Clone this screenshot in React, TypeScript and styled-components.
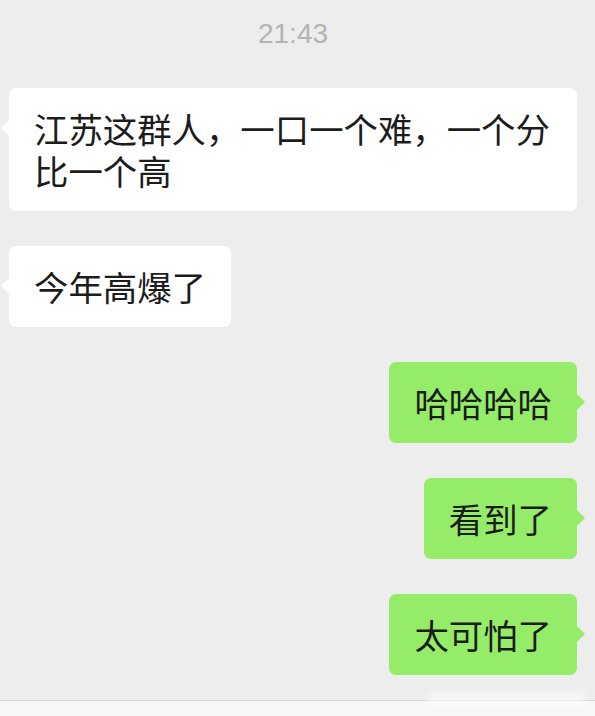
import React from 'react';
import styled, { createGlobalStyle } from 'styled-components';

const GlobalStyle = createGlobalStyle`
  html, body {
    margin: 0;
    padding: 0;
    background: #ededed;
  }
  body {
    font-family: 'Noto Sans CJK SC', 'Noto Sans', sans-serif;
  }
`;

const Screen = styled.div`
  position: relative;
  min-height: 716px;
  display: flex;
  flex-direction: column;
  background: #ededed;
  overflow: hidden;
`;

const Time = styled.div`
  margin-top: 14px;
  padding-right: 9px;
  height: 40px;
  line-height: 40px;
  text-align: center;
  font-family: 'Liberation Sans', 'Noto Sans', sans-serif;
  font-size: 28px;
  color: #b3b3b3;
`;

const List = styled.div`
  display: flex;
  flex-direction: column;
  gap: 35px;
  padding: 34px 18px 25px 9px;
`;

const Row = styled.div<{ $mine?: boolean }>`
  display: flex;
  justify-content: ${(p) => (p.$mine ? 'flex-end' : 'flex-start')};
`;

const Bubble = styled.div<{ $mine?: boolean }>`
  position: relative;
  max-width: 568px;
  box-sizing: border-box;
  padding: 19px 25px 20px;
  border-radius: 7px;
  background: ${(p) => (p.$mine ? '#95ec69' : '#ffffff')};
  color: #1c1c1c;
  font-size: 34.4px;
  line-height: 42px;

  &::before {
    content: '';
    position: absolute;
    top: 31px;
    ${(p) => (p.$mine ? 'right: -8px;' : 'left: -8px;')}
    border-top: 9px solid transparent;
    border-bottom: 9px solid transparent;
    ${(p) =>
      p.$mine
        ? 'border-left: 9px solid #95ec69;'
        : 'border-right: 9px solid #ffffff;'}
  }
`;

const Footer = styled.div`
  margin-top: auto;
  height: 16px;
  border-top: 1px solid #d4d4d4;
  background: #f7f7f7;
`;

const Watermark = styled.div`
  position: absolute;
  right: 8px;
  bottom: 11px;
  width: 160px;
  height: 14px;
  border-radius: 6px;
  background: rgba(255, 255, 255, 0.5);
  filter: blur(3px);
`;

const messages = [
  { mine: false, text: '江苏这群人，一口一个难，一个分比一个高' },
  { mine: false, text: '今年高爆了' },
  { mine: true, text: '哈哈哈哈' },
  { mine: true, text: '看到了' },
  { mine: true, text: '太可怕了' },
];

export default function App() {
  return (
    <Screen>
      <GlobalStyle />
      <Time>21:43</Time>
      <List>
        {messages.map((m, i) => (
          <Row key={i} $mine={m.mine}>
            <Bubble $mine={m.mine}>{m.text}</Bubble>
          </Row>
        ))}
      </List>
      <Footer />
      <Watermark />
    </Screen>
  );
}
